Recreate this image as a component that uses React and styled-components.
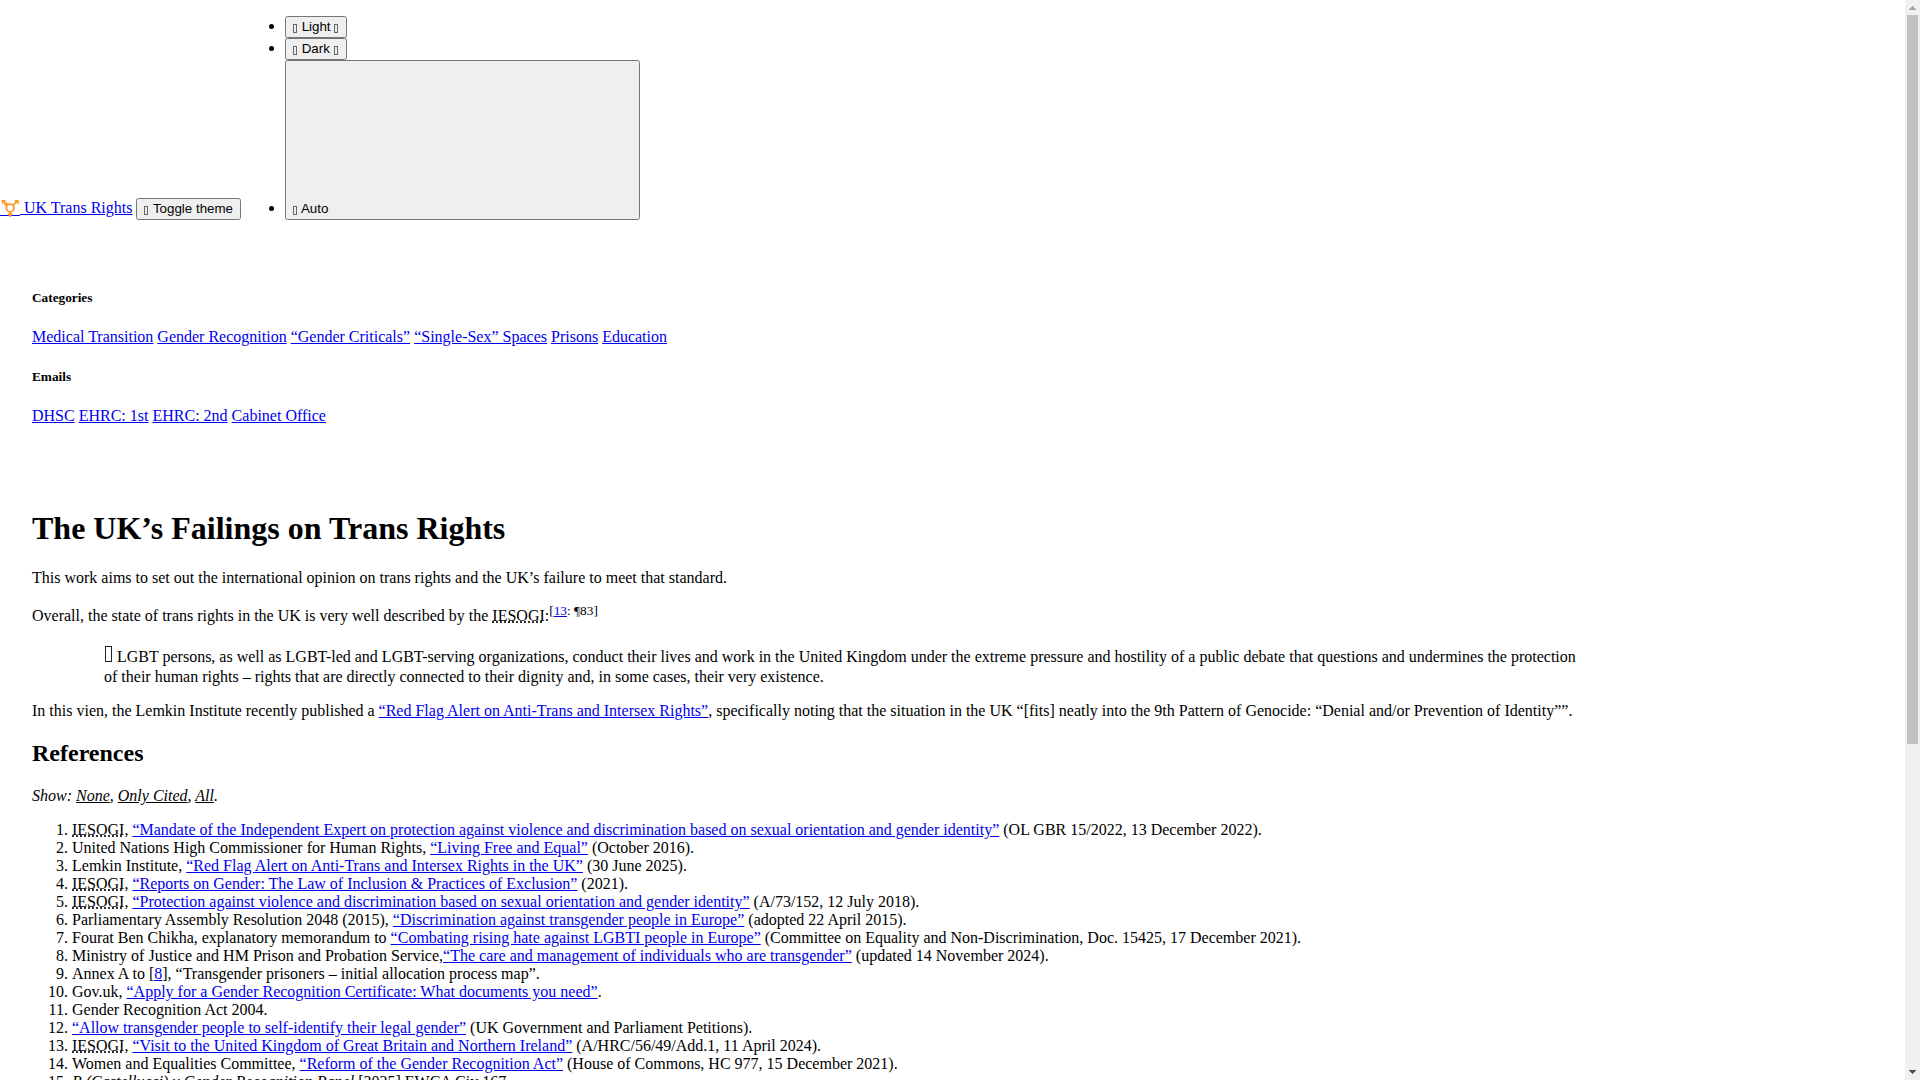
import React from "react";
import styled, { createGlobalStyle } from "styled-components";

const GlobalStyle = createGlobalStyle`
  body {
    margin: 0;
    background: #fff;
    color: #000;
    font-family: "Liberation Serif", serif;
    font-size: 16px;
  }
`;

const Page = styled.div`
  display: flex;
  height: 100vh;
`;

const Content = styled.div`
  flex: 1;
  min-width: 0;
  overflow-x: hidden;
  overflow-y: auto;
  scrollbar-width: none;
`;

const ScrollTrack = styled.div`
  display: flex;
  flex-direction: column;
  flex: none;
  width: 15px;
  background: #f0f0f0;
`;

const ScrollArrow = styled.svg`
  display: block;
  flex: none;
  width: 15px;
  height: 15px;
  fill: ${(p) => (p.$active ? "#505050" : "#a3a3a3")};
`;

const ScrollRail = styled.div`
  flex: 1;
  padding: 0 2px;
`;

const ScrollThumb = styled.div`
  height: 69.4%;
  background: #c1c1c1;
`;

const Link = styled.a`
  color: #0000ee;
  text-decoration: underline;
`;

const Logo = styled.svg`
  width: 20px;
  height: 20px;
  vertical-align: -4px;
`;

const ThemeButton = styled.button`
  font-family: "Liberation Sans", sans-serif;
`;

const Glyph = styled.i`
  display: inline-block;
  box-sizing: border-box;
  width: 4px;
  height: 9px;
  margin: 0 1px 2px 0;
  border: 1px solid #666;
  vertical-align: -4px;
`;

const QuoteGlyph = styled(Glyph)`
  width: 7px;
  height: 16px;
  margin: 5px 1px 6px;
  border-color: #222;
  vertical-align: -6px;
`;

const ThemeMenu = styled.ul`
  display: inline-block;
  margin: 16px 0;
  padding-left: 40px;
`;

const CheckSlot = styled.span`
  display: inline-block;
  width: 300px;
  height: 150px;
`;

const Sidebar = styled.aside`
  padding: 32px;
`;

const SideTitle = styled.h5`
  font-weight: bold;
`;

const Main = styled.main`
  box-sizing: border-box;
  max-width: 1656px;
  min-height: 1100px;
  padding: 32px;
`;

const Title = styled.h1`
  font-size: 32px;
`;

const Heading = styled.h2`
  margin: 20px 0;
  font-size: 24px;
`;

const Paragraph = styled.p`
  margin: 16px 0;
`;

const Quote = styled.blockquote`
  margin: 16px 40px;
  padding-left: 32px;
`;

const Filters = styled(Paragraph)`
  font-style: italic;
`;

const Filter = styled.a`
  color: inherit;
  text-decoration: underline;
`;

const References = styled.ol`
  margin: 16px 0;
  padding-left: 40px;
`;

const categories = [
  "Medical Transition",
  "Gender Recognition",
  "“Gender Criticals”",
  "“Single-Sex” Spaces",
  "Prisons",
  "Education",
];

const emails = ["DHSC", "EHRC: 1st", "EHRC: 2nd", "Cabinet Office"];

const Iesogi = () => (
  <abbr title="Independent Expert on sexual orientation and gender identity">IESOGI</abbr>
);

const references = [
  { by: <><Iesogi />, </>, title: "“Mandate of the Independent Expert on protection against violence and discrimination based on sexual orientation and gender identity”", after: " (OL GBR 15/2022, 13 December 2022)." },
  { by: "United Nations High Commissioner for Human Rights, ", title: "“Living Free and Equal”", after: " (October 2016)." },
  { by: "Lemkin Institute, ", title: "“Red Flag Alert on Anti-Trans and Intersex Rights in the UK”", after: " (30 June 2025)." },
  { by: <><Iesogi />, </>, title: "“Reports on Gender: The Law of Inclusion & Practices of Exclusion”", after: " (2021)." },
  { by: <><Iesogi />, </>, title: "“Protection against violence and discrimination based on sexual orientation and gender identity”", after: " (A/73/152, 12 July 2018)." },
  { by: "Parliamentary Assembly Resolution 2048 (2015), ", title: "“Discrimination against transgender people in Europe”", after: " (adopted 22 April 2015)." },
  { by: "Fourat Ben Chikha, explanatory memorandum to ", title: "“Combating rising hate against LGBTI people in Europe”", after: " (Committee on Equality and Non-Discrimination, Doc. 15425, 17 December 2021)." },
  { by: "Ministry of Justice and HM Prison and Probation Service,", title: "“The care and management of individuals who are transgender”", after: " (updated 14 November 2024)." },
  { by: "Annex A to [", title: "8", after: "], “Transgender prisoners – initial allocation process map”." },
  { by: "Gov.uk, ", title: "“Apply for a Gender Recognition Certificate: What documents you need”", after: "." },
  { by: "Gender Recognition Act 2004." },
  { title: "“Allow transgender people to self-identify their legal gender”", after: " (UK Government and Parliament Petitions)." },
  { by: <><Iesogi />, </>, title: "“Visit to the United Kingdom of Great Britain and Northern Ireland”", after: " (A/HRC/56/49/Add.1, 11 April 2024)." },
  { by: "Women and Equalities Committee, ", title: "“Reform of the Gender Recognition Act”", after: " (House of Commons, HC 977, 15 December 2021)." },
  { by: <><em>R (Castellucci) v Gender Recognition Panel</em> [2025] EWCA Civ 167.</> },
];

const LinkRow = ({ items }) => (
  <nav>
    {items.map((item) => (
      <React.Fragment key={item}>
        <Link href="#">{item}</Link>{" "}
      </React.Fragment>
    ))}
  </nav>
);

export default function App() {
  return (
    <Page>
      <GlobalStyle />
      <Content>
        <header>
          <Link href="#">
            <Logo viewBox="0 0 20 20" aria-hidden="true">
              <rect x="0" y="18" width="20" height="1" fill="#0000ee" />
              <g fill="none" stroke="#fd9a2f" strokeWidth="1.800">
                <circle cx="10.200" cy="11" r="3.800" />
                <path d="M10.200 14.500v5.500M7.700 17.500h5M7.500 8.300L3.500 4.500M13 8.300l4-3.800M4.500 8.500l2.800-2.800" />
              </g>
              <path fill="#fd9a2f" d="M1.700 3h4.800L1.700 7.800zM18.700 3h-4.800l4.800 4.800z" />
            </Logo>
            {" UK Trans Rights"}
          </Link>{" "}
          <ThemeButton type="button"><Glyph /> Toggle theme</ThemeButton>{" "}
          <ThemeMenu>
            <li><ThemeButton type="button"><Glyph /> Light <Glyph /></ThemeButton></li>
            <li><ThemeButton type="button"><Glyph /> Dark <Glyph /></ThemeButton></li>
            <li><ThemeButton type="button"><Glyph /> Auto <CheckSlot /></ThemeButton></li>
          </ThemeMenu>
        </header>
        <Sidebar>
          <SideTitle>Categories</SideTitle>
          <LinkRow items={categories} />
          <SideTitle>Emails</SideTitle>
          <LinkRow items={emails} />
        </Sidebar>
        <Main>
          <Title>The UK’s Failings on Trans Rights</Title>
          <Paragraph>This work aims to set out the international opinion on trans rights and the UK’s failure to meet that standard.</Paragraph>
          <Paragraph>
            Overall, the state of trans rights in the UK is very well described by the <Iesogi />:<sup>[<Link href="#ref-13">13</Link>: ¶83]</sup>
          </Paragraph>
          <Quote>
            <QuoteGlyph /> LGBT persons, as well as LGBT-led and LGBT-serving organizations, conduct their lives and work in the United Kingdom under the extreme pressure and hostility of a public debate that questions and undermines the protection of their human rights – rights that are directly connected to their dignity and, in some cases, their very existence.
          </Quote>
          <Paragraph>
            In this vien, the Lemkin Institute recently published a <Link href="#ref-3">“Red Flag Alert on Anti-Trans and Intersex Rights”</Link>, specifically noting that the situation in the UK “[fits] neatly into the 9th Pattern of Genocide: “Denial and/or Prevention of Identity””.
          </Paragraph>
          <Heading>References</Heading>
          <Filters>
            Show: <Filter href="#none">None</Filter>, <Filter href="#cited">Only Cited</Filter>, <Filter href="#all">All</Filter>.
          </Filters>
          <References>
            {references.map((r, i) => (
              <li key={i} id={`ref-${i + 1}`}>
                {r.by}
                {r.title && <Link href="#">{r.title}</Link>}
                {r.after}
              </li>
            ))}
          </References>
        </Main>
      </Content>
      <ScrollTrack aria-hidden="true">
        <ScrollArrow viewBox="0 0 15 15" shapeRendering="crispEdges">
          <path d="M4 10V9h1V8h1V7h1V6h1v1h1v1h1v1h1v1z" />
        </ScrollArrow>
        <ScrollRail>
          <ScrollThumb />
        </ScrollRail>
        <ScrollArrow $active viewBox="0 0 15 15" shapeRendering="crispEdges">
          <path d="M4 5v1h1v1h1v1h1v1h1V8h1V7h1V6h1V5z" />
        </ScrollArrow>
      </ScrollTrack>
    </Page>
  );
}
